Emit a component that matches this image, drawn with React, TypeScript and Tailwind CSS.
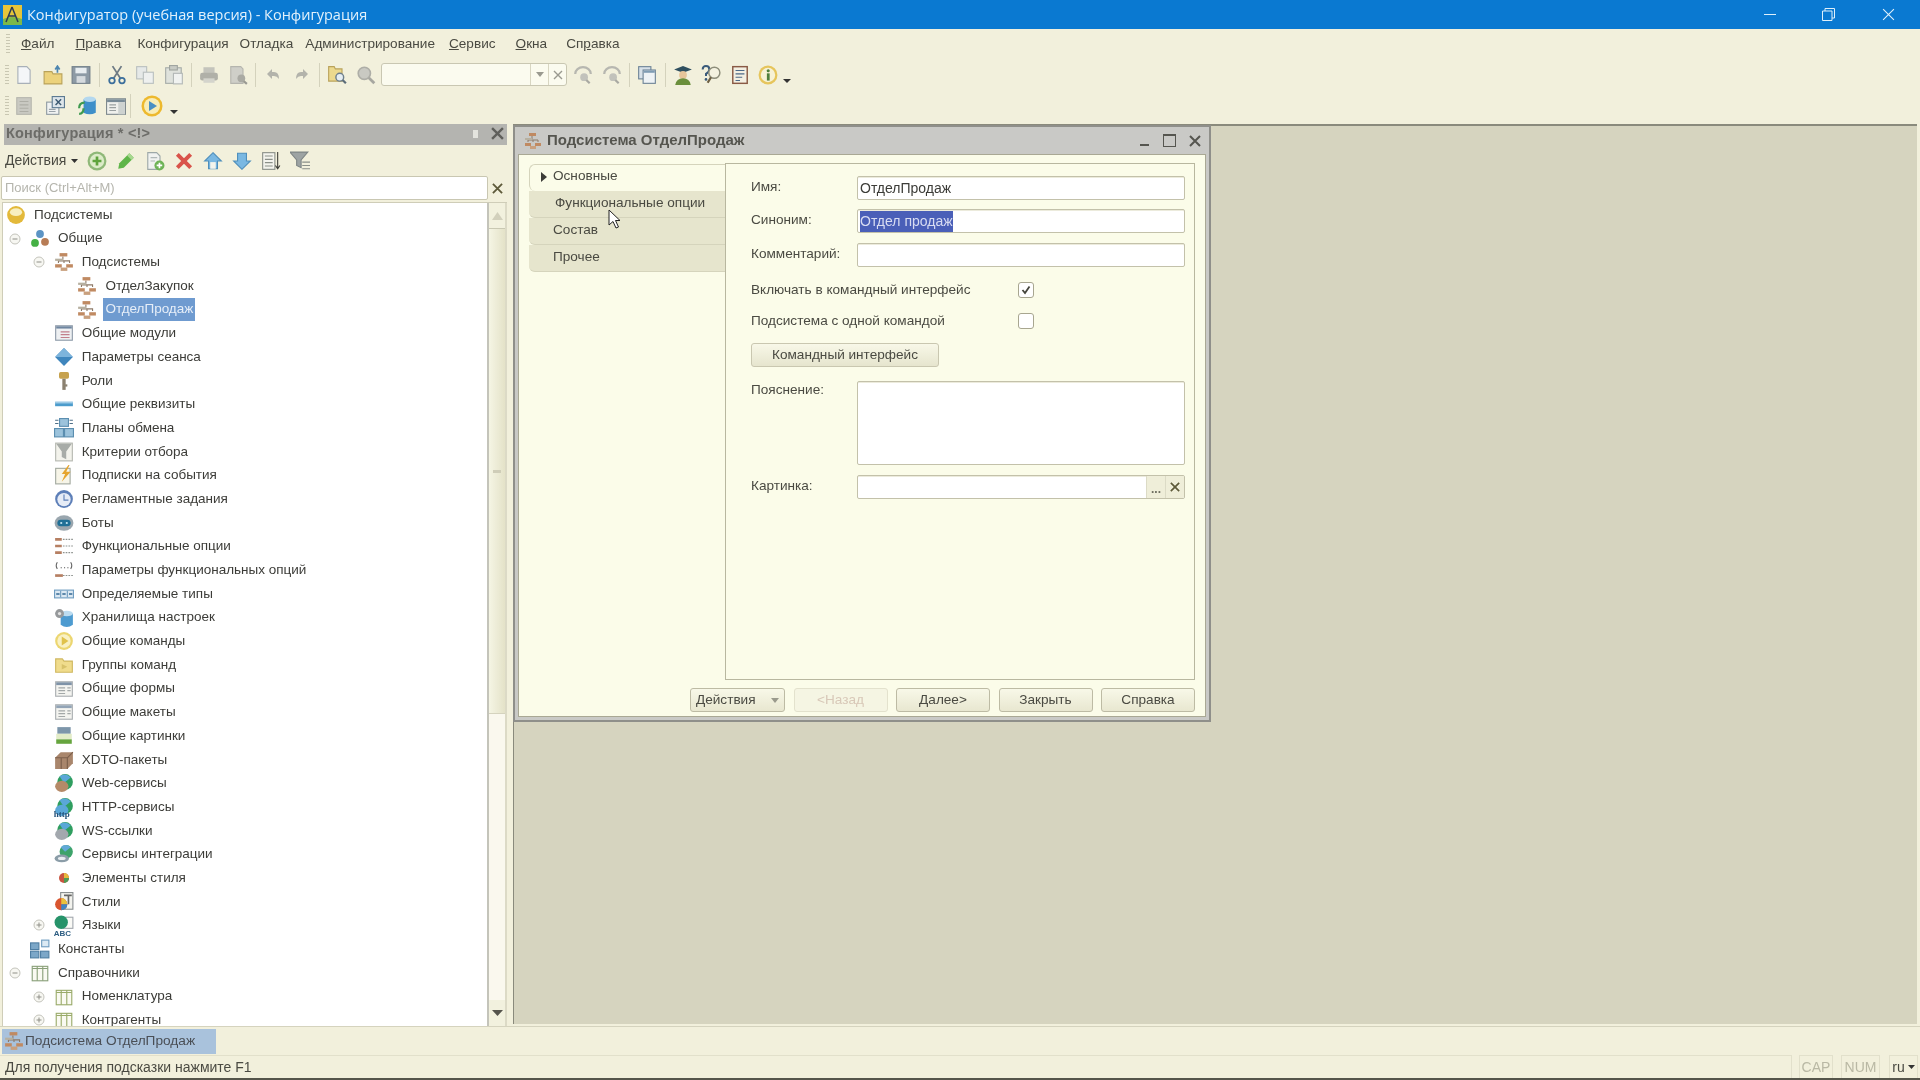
import type { ReactNode } from "react";

const UI = "font-['Liberation_Sans',Arial,sans-serif]";

const Svg = ({ children, s = 20 }: { children: ReactNode; s?: number }) => (
  <svg width={s} height={s} viewBox="0 0 18 18" className="shrink-0">
    {children}
  </svg>
);

const Hierarchy = ({ s = 20 }: { s?: number }) => (
  <Svg s={s}>
    <path d="M8 4v3M4 10V8h10v2M9 8v2" stroke="#8d7a68" fill="none" />
    <rect x="5" y="1" width="7" height="3" fill="#c08a62" />
    <rect x="1" y="6" width="7" height="2" fill="#b7b0a0" />
    <rect x="1" y="11" width="6" height="3" fill="#c08a62" />
    <rect x="11" y="11" width="6" height="3" fill="#c08a62" />
    <rect x="6" y="14" width="6" height="3" fill="#c9a07e" />
  </Svg>
);

const Sheet = ({ head = "#7f93a8" }: { head?: string }) => (
  <Svg>
    <rect x="1.5" y="2.5" width="15" height="13" fill="#f4f4f0" stroke="#a9aeb0" />
    <rect x="2" y="3" width="14" height="2.5" fill={head} />
    <path d="M4 8h6M4 10.5h6M4 13h6M12 8h3M12 10.5h3" stroke="#a3a8a8" />
  </Svg>
);

const Globe = ({ c = "#b58a68" }: { c?: string }) => (
  <Svg>
    <circle cx="10" cy="8" r="7" fill="#2f9e5f" />
    <path d="M5 3a7 7 0 0 1 10 1L9 9Z" fill="#5aa7d8" />
    <ellipse cx="7" cy="12" rx="6" ry="5" fill={c} />
  </Svg>
);

const Table = ({ c = "#8aa07a" }: { c?: string }) => (
  <Svg>
    <rect x="2" y="3" width="14" height="13" fill="#fafaf2" stroke={c} />
    <path d="M2 5h14M6.5 3v13M11.5 3v13" stroke={c} />
  </Svg>
);

const treeIcons: Record<string, ReactNode> = {
  root: (
    <Svg>
      <circle cx="9" cy="9" r="8" fill="#e3b93a" />
      <ellipse cx="9" cy="6.5" rx="5.5" ry="3.5" fill="#f8efc0" />
    </Svg>
  ),
  common: (
    <Svg>
      <circle cx="9" cy="4.5" r="3.5" fill="#5c94c4" />
      <circle cx="4.5" cy="12.5" r="3.5" fill="#45b045" />
      <circle cx="13.5" cy="11.5" r="3.5" fill="#b77c55" />
    </Svg>
  ),
  sub: <Hierarchy />,
  module: (
    <Svg>
      <rect x="1.5" y="2.5" width="15" height="13" fill="#eef0f2" stroke="#8e9aa8" />
      <rect x="2" y="3" width="14" height="2" fill="#6f86a0" />
      <path d="M6 8h8M6 10.5h8M6 13h8" stroke="#c27f8c" />
    </Svg>
  ),
  param: (
    <Svg>
      <path d="M9 1l8 8-8 8-8-8Z" fill="#3f86bd" />
      <path d="M9 1l8 8H1Z" fill="#7db4dc" />
    </Svg>
  ),
  key: (
    <Svg>
      <rect x="4.5" y="1" width="9" height="6" rx="1.5" fill="#c7a24e" />
      <rect x="7.5" y="7" width="3" height="10" fill="#8b8170" />
      <rect x="10" y="12" width="2" height="2" fill="#8b8170" />
    </Svg>
  ),
  bar: (
    <Svg>
      <rect x="1" y="7" width="16" height="4" fill="#4c9ccc" />
      <rect x="1" y="7" width="16" height="1.5" fill="#9fcbe6" />
    </Svg>
  ),
  exchange: (
    <Svg>
      <rect x="5" y="0.5" width="8" height="7" fill="#9cc3dc" stroke="#5b8eb0" />
      <rect x="0.5" y="9.5" width="8" height="7.5" fill="#9cc3dc" stroke="#5b8eb0" />
      <rect x="9.5" y="9.5" width="8" height="7.5" fill="#9cc3dc" stroke="#5b8eb0" />
      <path d="M1 2h3M14 2h3M1 5h3M14 5h3" stroke="#4d6f88" />
    </Svg>
  ),
  filter: (
    <Svg>
      <rect x="1.5" y="1" width="15" height="16" fill="#f3f3ec" stroke="#b5b8b0" />
      <path d="M2 1.5h14l-5 7v7l-4-2v-5Z" fill="#a8aca8" />
    </Svg>
  ),
  event: (
    <Svg>
      <rect x="1.5" y="3" width="13" height="14" fill="#f7f5e8" stroke="#a3a99f" />
      <path d="M13 0l-6 8h3l-3 7 8-9h-4l3-6Z" fill="#e6a52e" />
    </Svg>
  ),
  clock: (
    <Svg>
      <circle cx="9" cy="9" r="8" fill="#5d7fb8" />
      <circle cx="9" cy="9.5" r="6" fill="#e6ecf6" />
      <path d="M9 5v5h4" stroke="#5d7fb8" fill="none" />
    </Svg>
  ),
  bot: (
    <Svg>
      <ellipse cx="9" cy="9" rx="8.5" ry="7" fill="#9aa6ae" />
      <rect x="3" y="6" width="12" height="6" rx="3" fill="#1f6f96" />
      <circle cx="6.5" cy="9" r="1" fill="#c3e4f0" />
      <circle cx="11.5" cy="9" r="1" fill="#c3e4f0" />
    </Svg>
  ),
  option: (
    <Svg>
      <path d="M1 3h6M1 9h6M1 15h6" stroke="#b67f62" strokeWidth="2.4" />
      <path d="M8 3h9M8 9h9M8 15h9" stroke="#8e938f" strokeDasharray="1.5 1" />
    </Svg>
  ),
  optparam: (
    <Svg>
      <path d="M3 2Q1 5 3 8M15 2Q17 5 15 8" stroke="#666" fill="none" />
      <path d="M6 7h1M9 7h1M12 7h1" stroke="#555" />
      <path d="M1 14h7" stroke="#b67f62" strokeWidth="2.4" />
      <path d="M8 14h9" stroke="#8e938f" strokeDasharray="1.5 1" />
    </Svg>
  ),
  types: (
    <Svg>
      <rect x="0.5" y="5.5" width="17" height="7" fill="#dbe8f2" stroke="#6f9cc0" />
      <path d="M6 6v6M12 6v6" stroke="#6f9cc0" />
      <path d="M2 9h3M7.5 9h3M13.5 9h3" stroke="#5d88ab" strokeWidth="2" />
    </Svg>
  ),
  storage: (
    <Svg>
      <path d="M6 5h11v10q-5.5 4-11 0Z" fill="#4d9bd0" />
      <ellipse cx="11.5" cy="5" rx="5.5" ry="2.5" fill="#bcdcf0" />
      <circle cx="5" cy="5" r="4" fill="#96999b" />
      <circle cx="5" cy="5" r="1.5" fill="#e2e2e2" />
    </Svg>
  ),
  play: (
    <Svg>
      <circle cx="9" cy="9" r="8" fill="#ecd670" />
      <circle cx="9" cy="9" r="6" fill="#f9f1c4" />
      <path d="M7 5l6 4-6 4Z" fill="#e0c24c" />
    </Svg>
  ),
  folder: (
    <Svg>
      <path d="M1.5 3.5h6l1.5 2h7.5v10h-15Z" fill="#f0dc8c" stroke="#cfb860" />
      <path d="M7 8l5 2.5-5 2.5Z" fill="#d8c26a" />
    </Svg>
  ),
  form: <Sheet />,
  layout: <Sheet head="#92a4b6" />,
  picture: (
    <Svg>
      <rect x="3" y="1" width="12" height="6" fill="#7d96aa" />
      <rect x="2" y="7" width="14" height="5" fill="#e3ecc8" />
      <rect x="2" y="12" width="14" height="4" fill="#66a53e" />
    </Svg>
  ),
  xdto: (
    <Svg>
      <path d="M1 7l5-5h11v10l-5 5H1Z" fill="#a9866c" />
      <path d="M1 7h11v10M12 7l5-5M6.5 7v10" stroke="#7b5f4b" fill="none" />
    </Svg>
  ),
  web: <Globe />,
  http: (
    <div className="relative h-[20px] w-[20px] shrink-0">
      <Globe c="#5aa7d8" />
      <span className="absolute bottom-[-2px] left-0 font-['Liberation_Serif',serif] text-[9px] leading-[10px] font-bold text-[#24527a]">
        http
      </span>
    </div>
  ),
  ws: <Globe c="#a3a8ae" />,
  integration: (
    <Svg>
      <circle cx="11" cy="7" r="6" fill="#3da36a" />
      <path d="M6 3a6 6 0 0 1 9 0l-5 4Z" fill="#62a9d8" />
      <ellipse cx="7" cy="13" rx="6.5" ry="3.5" fill="#8b9da8" />
      <ellipse cx="7" cy="13" rx="3.5" ry="1.5" fill="#e8edf0" />
    </Svg>
  ),
  styleItem: (
    <Svg>
      <circle cx="9" cy="9" r="4.5" fill="#c9543f" />
      <path d="M9 9V4.5a4.5 4.5 0 0 1 4.5 4.5Z" fill="#e6b93d" />
      <path d="M9 9h4.5A4.5 4.5 0 0 1 9 13.5Z" fill="#4f9a55" />
    </Svg>
  ),
  styles: (
    <Svg>
      <rect x="6" y="0.5" width="11" height="15" fill="#f3f3ee" stroke="#8a8f90" />
      <path d="M9 3h7M13 3v8" stroke="#666" strokeWidth="1.5" />
      <circle cx="6.5" cy="11" r="5.5" fill="#d9552f" />
      <path d="M6.5 11V5.5A5.5 5.5 0 0 1 12 11Z" fill="#e9c13c" />
      <path d="M6.5 11H12A5.5 5.5 0 0 1 6.5 16.5Z" fill="#3f85c4" />
    </Svg>
  ),
  lang: (
    <div className="relative h-[20px] w-[20px] shrink-0">
      <Svg>
        <rect x="8" y="2" width="9" height="10" fill="#fafaf6" stroke="#a3a8ae" />
        <circle cx="6.5" cy="6.5" r="6" fill="#27936a" />
      </Svg>
      <span className="absolute bottom-[-3px] left-0 text-[8px] leading-[9px] font-bold text-[#2d5d82]">ABC</span>
    </div>
  ),
  constant: (
    <Svg>
      <rect x="0.5" y="3.5" width="7.5" height="6" fill="#7ca7c8" stroke="#4f7ea3" />
      <rect x="0.5" y="11" width="7.5" height="6" fill="#7ca7c8" stroke="#4f7ea3" />
      <rect x="9.5" y="11" width="7.5" height="6" fill="#7ca7c8" stroke="#4f7ea3" />
      <rect x="10.5" y="1" width="6.5" height="6" fill="#dceaf4" stroke="#6f9cc0" />
    </Svg>
  ),
  table: <Table />,
  tableGreen: <Table c="#9aab6a" />,
};

type TreeRow = { label: string; level: number; icon: string; toggle?: "-" | "+"; selected?: boolean };

const treeRows: TreeRow[] = [
  { label: "Подсистемы", level: 0, icon: "root" },
  { label: "Общие", level: 1, icon: "common", toggle: "-" },
  { label: "Подсистемы", level: 2, icon: "sub", toggle: "-" },
  { label: "ОтделЗакупок", level: 3, icon: "sub" },
  { label: "ОтделПродаж", level: 3, icon: "sub", selected: true },
  { label: "Общие модули", level: 2, icon: "module" },
  { label: "Параметры сеанса", level: 2, icon: "param" },
  { label: "Роли", level: 2, icon: "key" },
  { label: "Общие реквизиты", level: 2, icon: "bar" },
  { label: "Планы обмена", level: 2, icon: "exchange" },
  { label: "Критерии отбора", level: 2, icon: "filter" },
  { label: "Подписки на события", level: 2, icon: "event" },
  { label: "Регламентные задания", level: 2, icon: "clock" },
  { label: "Боты", level: 2, icon: "bot" },
  { label: "Функциональные опции", level: 2, icon: "option" },
  { label: "Параметры функциональных опций", level: 2, icon: "optparam" },
  { label: "Определяемые типы", level: 2, icon: "types" },
  { label: "Хранилища настроек", level: 2, icon: "storage" },
  { label: "Общие команды", level: 2, icon: "play" },
  { label: "Группы команд", level: 2, icon: "folder" },
  { label: "Общие формы", level: 2, icon: "form" },
  { label: "Общие макеты", level: 2, icon: "layout" },
  { label: "Общие картинки", level: 2, icon: "picture" },
  { label: "XDTO-пакеты", level: 2, icon: "xdto" },
  { label: "Web-сервисы", level: 2, icon: "web" },
  { label: "HTTP-сервисы", level: 2, icon: "http" },
  { label: "WS-ссылки", level: 2, icon: "ws" },
  { label: "Сервисы интеграции", level: 2, icon: "integration" },
  { label: "Элементы стиля", level: 2, icon: "styleItem" },
  { label: "Стили", level: 2, icon: "styles" },
  { label: "Языки", level: 2, icon: "lang", toggle: "+" },
  { label: "Константы", level: 1, icon: "constant" },
  { label: "Справочники", level: 1, icon: "table", toggle: "-" },
  { label: "Номенклатура", level: 2, icon: "tableGreen", toggle: "+" },
  { label: "Контрагенты", level: 2, icon: "tableGreen", toggle: "+" },
];

const Toggle = ({ kind }: { kind: "-" | "+" }) => (
  <svg width="12" height="12" viewBox="0 0 12 12">
    <circle cx="6" cy="6" r="5" fill="#f7f7f2" stroke="#c4c4bc" />
    <path d={kind === "-" ? "M3.5 6h5" : "M3.5 6h5M6 3.5v5"} stroke="#8f8f88" />
  </svg>
);

const Tree = () => (
  <div className="min-w-0 flex-1 overflow-hidden bg-white">
    {treeRows.map((row, i) => (
      <div key={i} className="flex h-[23.7px] items-center">
        {row.level > 0 && <div className="shrink-0" style={{ width: (row.level - 1) * 23.7 + 6 }} />}
        {row.level > 0 && (
          <div className="flex w-[21px] shrink-0 items-center">{row.toggle && <Toggle kind={row.toggle} />}</div>
        )}
        {row.level === 0 && <div className="w-[3px] shrink-0" />}
        <div className="flex w-[26px] shrink-0 items-center">{treeIcons[row.icon]}</div>
        <span
          className={
            row.selected
              ? "flex h-[23px] items-center bg-[#6f9bd0] px-[2px] text-[13.5px] text-[#e6eef8]"
              : "px-[2px] text-[13.5px] text-[#3c3c38]"
          }
        >
          {row.label}
        </span>
      </div>
    ))}
  </div>
);

const ToolIcon = ({ name }: { name: string }) => {
  switch (name) {
    case "new":
      return (
        <Svg>
          <path d="M3.5 1.5h8l3 3v12h-11Z" fill="#f4f6f8" stroke="#a8b0b8" />
        </Svg>
      );
    case "open":
      return (
        <Svg>
          <path d="M1 6h7l1 2h8v9H1Z" fill="#ecd27c" stroke="#b9a25a" />
          <path d="M13 7V2M11 4l2-3 2 3" stroke="#4d86b0" fill="none" strokeWidth="1.5" />
        </Svg>
      );
    case "save":
      return (
        <Svg>
          <rect x="1" y="1.5" width="16" height="15" fill="#8d9aa5" stroke="#727f8a" />
          <rect x="4" y="2.5" width="10" height="5" fill="#e8edf0" />
          <rect x="5" y="10" width="8" height="6" fill="#d5dade" />
        </Svg>
      );
    case "cut":
      return (
        <Svg>
          <path d="M5 1l7 11M13 1L6 12" stroke="#6d7a84" strokeWidth="1.6" />
          <circle cx="4.5" cy="14" r="2.5" fill="none" stroke="#3c6f9c" strokeWidth="1.6" />
          <circle cx="13.5" cy="14" r="2.5" fill="none" stroke="#3c6f9c" strokeWidth="1.6" />
        </Svg>
      );
    case "copy":
      return (
        <Svg>
          <rect x="1.5" y="1.5" width="9" height="11" fill="#e6e9e8" stroke="#b9bfbf" />
          <rect x="7.5" y="6.5" width="9" height="10" fill="#eef0ef" stroke="#b9bfbf" />
        </Svg>
      );
    case "paste":
      return (
        <Svg>
          <rect x="1.5" y="2.5" width="14" height="14" fill="#dfe2dc" stroke="#a6aca8" />
          <rect x="5" y="0.5" width="7" height="4" fill="#c8cbc4" stroke="#a0a5a0" />
          <rect x="8.5" y="7.5" width="8" height="9.5" fill="#f0f2f0" stroke="#b3b8b6" />
        </Svg>
      );
    case "print":
      return (
        <Svg>
          <rect x="4" y="2" width="10" height="6" fill="#c4c4bc" />
          <rect x="1" y="7" width="16" height="7" rx="2" fill="#b0b0a8" />
          <rect x="4" y="12" width="10" height="4" fill="#d4d4cc" />
        </Svg>
      );
    case "preview":
      return (
        <Svg>
          <path d="M2.5 1.5h9l2 2v13h-11Z" fill="#cfcfc8" stroke="#b5b5ae" />
          <circle cx="12" cy="12" r="3.5" fill="#aaaaa3" />
          <path d="M14 14.5l3 2.5" stroke="#9a9a93" strokeWidth="2" />
        </Svg>
      );
    case "undo":
      return (
        <svg width="14" height="14" viewBox="0 0 14 14">
          <path d="M1 6l5-5v3h2q5 0 5 7-2-3-5-3H6v3Z" fill="#b3b3ab" />
        </svg>
      );
    case "redo":
      return (
        <svg width="14" height="14" viewBox="0 0 14 14">
          <path d="M13 6L8 1v3H6q-5 0-5 7 2-3 5-3h2v3Z" fill="#b3b3ab" />
        </svg>
      );
    case "find":
      return (
        <Svg>
          <path d="M1.5 1.5h5l1 2h6v11h-12Z" fill="#ecd98e" stroke="#b9a25a" />
          <circle cx="11.5" cy="11" r="3.5" fill="#e6eef3" stroke="#6e7f8c" strokeWidth="1.3" />
          <path d="M14 13.5l3 3" stroke="#5c6d7a" strokeWidth="2" />
        </Svg>
      );
    case "zoom":
      return (
        <Svg>
          <circle cx="7.5" cy="7.5" r="5.5" fill="#c9c9c2" stroke="#aeaea7" strokeWidth="1.5" />
          <path d="M11.5 11.5l5 5" stroke="#a7a7a0" strokeWidth="2.5" />
        </Svg>
      );
    case "prevRes":
    case "nextRes":
      return (
        <Svg>
          <path d="M2 8a7 6 0 0 1 14 0" stroke="#b7b7b0" strokeWidth="2" fill="none" />
          <circle cx="10" cy="11" r="3.5" fill="#c2c2bb" />
          <path d="M12 13.5l3 3" stroke="#a9a9a2" strokeWidth="2" />
        </Svg>
      );
    case "windows":
      return (
        <Svg>
          <rect x="1.5" y="1.5" width="11" height="11" fill="#d8e1e8" stroke="#6d8396" />
          <rect x="5.5" y="4.5" width="11" height="12" fill="#eef2f5" stroke="#6d8396" />
          <rect x="6" y="5" width="10" height="2" fill="#7f9cb3" />
        </Svg>
      );
    case "teacher":
      return (
        <Svg>
          <path d="M1 4l8-3 8 3-8 3Z" fill="#2f4f5f" />
          <circle cx="9" cy="9" r="3.5" fill="#e7c59a" />
          <path d="M2 18q1-6 7-6t7 6Z" fill="#6b8f3c" />
        </Svg>
      );
    case "helpFind":
      return (
        <Svg>
          <path d="M1.5 4q0-3 3-3t3 3q0 2-3 4v2" stroke="#3a5a7a" strokeWidth="1.8" fill="none" />
          <circle cx="4.5" cy="13" r="1.2" fill="#3a5a7a" />
          <circle cx="12" cy="7" r="5" fill="#f4f2e0" stroke="#8d8d7a" strokeWidth="1.3" />
          <path d="M9 11l-3 5" stroke="#6d5f42" strokeWidth="2" />
        </Svg>
      );
    case "book":
      return (
        <Svg>
          <rect x="2.5" y="1.5" width="13" height="15" fill="#f3efe2" stroke="#8a5a45" strokeWidth="1.3" />
          <path d="M5 5h8M5 8h8M5 11h6M5 14h4" stroke="#4d6a88" />
        </Svg>
      );
    case "info":
      return (
        <Svg>
          <circle cx="9" cy="9" r="8.5" fill="#e6c55c" />
          <circle cx="9" cy="9" r="6.5" fill="#f7f2d6" />
          <rect x="8" y="7.5" width="2.5" height="6.5" fill="#4f7f3c" />
          <circle cx="9.2" cy="5.2" r="1.4" fill="#4f7f3c" />
        </Svg>
      );
    case "doc":
      return (
        <Svg>
          <rect x="2.5" y="1.5" width="13" height="15" fill="#c9c9c2" stroke="#b6b6ae" />
          <path d="M5 5h8M5 8h8M5 11h8M5 14h8" stroke="#aeaea6" />
        </Svg>
      );
    case "xdoc":
      return (
        <Svg>
          <rect x="1.5" y="5.5" width="11" height="11" fill="#f0f2f2" stroke="#8f9aa2" />
          <rect x="6.5" y="0.5" width="11" height="10" fill="#dde5ea" stroke="#5c7a92" />
          <path d="M9.5 3l5 5M14.5 3l-5 5" stroke="#3c5a72" strokeWidth="1.3" />
          <path d="M3.5 12h6M3.5 14h6" stroke="#9aa3aa" />
        </Svg>
      );
    case "db":
      return (
        <Svg>
          <path d="M5 3v12q5.5 3 11 0V3Z" fill="#3e8fc9" />
          <ellipse cx="10.5" cy="3" rx="5.5" ry="2.5" fill="#b4d8ef" />
          <path d="M1 11q0-5 5-5M1 16q4 0 4-5" stroke="#3f9a4f" strokeWidth="2" fill="none" />
        </Svg>
      );
    case "tableWin":
      return (
        <Svg>
          <rect x="0.5" y="2.5" width="17" height="14" fill="#eff0ec" stroke="#7f8a8e" />
          <rect x="1" y="3" width="16" height="2.5" fill="#778a96" />
          <rect x="11" y="5.5" width="6" height="11" fill="#cdd2d0" />
          <path d="M3 8h6M3 10.5h6M3 13h6" stroke="#9aa0a0" />
        </Svg>
      );
    case "run":
      return (
        <svg width="22" height="22" viewBox="0 0 22 22">
          <circle cx="11" cy="11" r="10.5" fill="#edb92e" />
          <circle cx="11" cy="11" r="8" fill="#f9edb6" />
          <path d="M8 6l8 5-8 5Z" fill="#4a8fc4" />
        </svg>
      );
    default:
      return null;
  }
};

const Sep = () => <div className="mx-[3px] h-[24px] w-px shrink-0 bg-[#d4d2bc]" />;
const Tool = ({ name, w = 28.5 }: { name: string; w?: number }) => (
  <div className="flex h-[26px] shrink-0 items-center justify-center" style={{ width: w }}>
    <ToolIcon name={name} />
  </div>
);
const Grip = () => (
  <div className="h-[20px] w-[4px] shrink-0 bg-[repeating-linear-gradient(180deg,#c9c7b2_0,#c9c7b2_1px,transparent_1px,transparent_3px)]" />
);
const Caret = () => (
  <svg width="8" height="4" viewBox="0 0 8 4" className="mt-[12px] shrink-0">
    <path d="M0 0h8L4 4Z" fill="#333" />
  </svg>
);

const menuItems = [
  { label: "Файл", u: 0, mr: 21 },
  { label: "Правка", u: 0, mr: 16 },
  { label: "Конфигурация", u: -1, mr: 11 },
  { label: "Отладка", u: -1, mr: 12 },
  { label: "Администрирование", u: -1, mr: 14 },
  { label: "Сервис", u: 0, mr: 20 },
  { label: "Окна", u: 0, mr: 19 },
  { label: "Справка", u: 2, mr: 0 },
];

const MenuBar = () => (
  <div className="flex h-[30px] shrink-0 items-center pl-[6px] text-[13.6px] text-[#4a4a42]">
    <Grip />
    <div className="ml-[11px] flex">
      {menuItems.map((m) => (
        <span key={m.label} style={{ marginRight: m.mr }}>
          {m.u >= 0 ? (
            <>
              {m.label.slice(0, m.u)}
              <span className="underline">{m.label[m.u]}</span>
              {m.label.slice(m.u + 1)}
            </>
          ) : (
            m.label
          )}
        </span>
      ))}
    </div>
  </div>
);

const ToolbarOne = () => (
  <div className="flex h-[31px] shrink-0 items-center pl-[5px]">
    <Grip />
    <div className="ml-[1px] flex items-center">
      <Tool name="new" />
      <Tool name="open" />
      <Tool name="save" />
      <Sep />
      <Tool name="cut" />
      <Tool name="copy" />
      <Tool name="paste" />
      <Sep />
      <Tool name="print" />
      <Tool name="preview" />
      <Sep />
      <Tool name="undo" />
      <Tool name="redo" />
      <Sep />
      <Tool name="find" />
      <Tool name="zoom" />
      <div className="ml-[1px] flex h-[23px] w-[186px] shrink-0 items-center rounded-[3px] border border-[#c9c7b2] bg-[#fbfbef]">
        <div className="h-full flex-1" />
        <div className="flex h-full w-[18px] items-center justify-center border-l border-[#d8d6c2]">
          <svg width="8" height="5" viewBox="0 0 8 5">
            <path d="M0 0h8L4 5Z" fill="#9a9a90" />
          </svg>
        </div>
        <div className="flex h-full w-[18px] items-center justify-center border-l border-[#d8d6c2] text-[#9a9a90]">
          <svg width="10" height="10" viewBox="0 0 10 10">
            <path d="M1 1l8 8M9 1l-8 8" stroke="currentColor" strokeWidth="1.4" />
          </svg>
        </div>
      </div>
      <div className="w-[2px]" />
      <Tool name="prevRes" />
      <Tool name="nextRes" />
      <Sep />
      <Tool name="windows" />
      <Sep />
      <Tool name="teacher" />
      <Tool name="helpFind" />
      <Tool name="book" />
      <Tool name="info" />
      <Caret />
    </div>
  </div>
);

const ToolbarTwo = () => (
  <div className="flex h-[34px] shrink-0 items-center pb-[2px] pl-[5px]">
    <Grip />
    <div className="ml-[1px] flex items-center">
      <Tool name="doc" w={28} />
      <Tool name="xdoc" w={33} />
      <Tool name="db" w={33} />
      <Tool name="tableWin" w={23} />
      <Sep />
      <Tool name="run" w={36} />
      <Caret />
    </div>
  </div>
);

const XMark = ({ c = "#5e5a3a", s = 12, w = 2 }: { c?: string; s?: number; w?: number }) => (
  <svg width={s} height={s} viewBox="0 0 12 12" className="shrink-0">
    <path d="M1 1l10 10M11 1L1 11" stroke={c} strokeWidth={w} />
  </svg>
);

const ActionIcon = ({ name }: { name: string }) => {
  switch (name) {
    case "add":
      return (
        <Svg>
          <circle cx="9" cy="9" r="8.5" fill="#8fb878" />
          <circle cx="9" cy="9" r="6.5" fill="#dcebc8" />
          <path d="M9 5v8M5 9h8" stroke="#5ea33c" strokeWidth="2.4" />
        </Svg>
      );
    case "edit":
      return (
        <Svg>
          <path d="M12 2l4 4-9 9-5 1 1-5Z" fill="#5fb548" />
          <path d="M12 2l4 4-2 2-4-4Z" fill="#a8d890" />
        </Svg>
      );
    case "copyAdd":
      return (
        <Svg>
          <path d="M2.5 1.5h8l3 3v12h-11Z" fill="#f0f2f0" stroke="#9da8a8" />
          <path d="M5 6h6M5 9h4" stroke="#b0b8b8" />
          <circle cx="13" cy="13" r="4.5" fill="#6eb356" />
          <path d="M13 10.5v5M10.5 13h5" stroke="#fff" strokeWidth="1.5" />
        </Svg>
      );
    case "del":
      return (
        <Svg>
          <path d="M3 3l12 12M15 3L3 15" stroke="#d9534a" strokeWidth="3.6" />
        </Svg>
      );
    case "up":
      return (
        <Svg>
          <path d="M9 1.5l7.5 7.5H13v7H5V9H1.5Z" fill="#7ab8e2" stroke="#4f8fbc" />
          <rect x="6.5" y="10" width="5" height="6" fill="#f4f4ec" />
        </Svg>
      );
    case "down":
      return (
        <Svg>
          <path d="M9 16.5L1.5 9H5V2h8v7h3.5Z" fill="#7ab8e2" stroke="#4f8fbc" />
        </Svg>
      );
    case "sort":
      return (
        <Svg>
          <rect x="1.5" y="1.5" width="11" height="15" fill="#f4f4ee" stroke="#8a8f88" />
          <path d="M3.5 4.5h7M3.5 7.5h7M3.5 10.5h7M3.5 13.5h7" stroke="#8a8f88" />
          <path d="M15 1v14M13 13l2 3 2-3" stroke="#3f3f3a" fill="none" />
        </Svg>
      );
    case "filter":
      return (
        <Svg>
          <path d="M0 1h16l-6 7v7l-4-2V8Z" fill="#9da3a3" stroke="#7f8686" />
          <path d="M11 10h7M11 13h7M11 16h7" stroke="#8a8f88" />
        </Svg>
      );
    default:
      return null;
  }
};

const ConfigPanel = () => (
  <div className="flex w-[507px] shrink-0 flex-col">
    <div className="ml-[4px] flex h-[21px] shrink-0 items-center justify-between bg-[#b4b4b0] pr-[3px] pb-[2px] pl-[2px]">
      <span className="text-[14.5px] font-bold tracking-[0.2px] text-[#6c6c68]">Конфигурация * &lt;!&gt;</span>
      <div className="flex items-center gap-[13px]">
        <div className="h-[8px] w-[5px] bg-[#e4e4de]" />
        <XMark c="#5f5f5b" s={13} w={2.2} />
      </div>
    </div>
    <div className="flex h-[31px] shrink-0 items-center pl-[5px] text-[14px] text-[#4a4a42]">
      <span>Действия</span>
      <svg width="7" height="4" viewBox="0 0 7 4" className="ml-[5px]">
        <path d="M0 0h7L3.5 4Z" fill="#333" />
      </svg>
      <div className="ml-[4px] flex items-center">
        {["add", "edit", "copyAdd", "del", "up", "down", "sort", "filter"].map((n) => (
          <div key={n} className="flex h-[24px] w-[29px] items-center justify-center">
            <ActionIcon name={n} />
          </div>
        ))}
      </div>
    </div>
    <div className="flex h-[24px] shrink-0 items-center pl-[1px]">
      <div className="flex h-full w-[487px] items-center rounded-[2px] border border-[#c9c7b2] bg-white pl-[3px] text-[13px] text-[#b5b5ad]">
        Поиск (Ctrl+Alt+M)
      </div>
      <div className="flex flex-1 items-center justify-center">
        <XMark c="#5e5a3a" s={11} />
      </div>
    </div>
    <div className="mt-[2px] ml-[2px] flex min-h-0 flex-1 border-t border-l border-[#cfcdb8]">
      <Tree />
      <div className="flex w-[20px] shrink-0 flex-col border-x-[2px] border-x-[#c4c4ba] border-r-[#dcdac6] bg-[#faf8ee]">
        <div className="flex h-[26px] shrink-0 items-center justify-center border-b border-[#c9c8b2] bg-[#f2f1de]">
          <svg width="11" height="8" viewBox="0 0 11 8">
            <path d="M5.5 0L11 8H0Z" fill="#d2d0bc" />
          </svg>
        </div>
        <div className="flex h-[485px] shrink-0 items-center justify-center border-b border-[#d5d3be] bg-gradient-to-r from-[#f5f5e4] to-[#e4e2c8]">
          <div className="h-[3px] w-[8px] bg-[#cfcdb8]" />
        </div>
        <div className="flex-1" />
        <div className="flex h-[26px] shrink-0 items-center justify-center bg-[#f2f1de]">
          <svg width="11" height="6" viewBox="0 0 11 6">
            <path d="M5.5 6L11 0H0Z" fill="#55544c" />
          </svg>
        </div>
      </div>
    </div>
  </div>
);

const Field = ({ children, className = "" }: { children?: ReactNode; className?: string }) => (
  <div
    className={`flex h-[24px] w-[328px] items-center overflow-hidden rounded-[2px] border border-[#c3c1aa] bg-white pl-[2px] text-[14px] text-[#3c3c38] shadow-[inset_0_1px_0_#ecebdc] ${className}`}
  >
    {children}
  </div>
);

const Label = ({ children }: { children: ReactNode }) => (
  <span className="-mt-[2px] w-[106px] shrink-0 text-[#4a4a42]">{children}</span>
);

const Check = ({ checked }: { checked?: boolean }) => (
  <div className="flex h-[16px] w-[16px] items-center justify-center rounded-[3px] border border-[#a8a690] bg-white">
    {checked && (
      <svg width="10" height="10" viewBox="0 0 10 10">
        <path d="M1.5 5l2.5 3 4.5-6.5" stroke="#45453c" strokeWidth="1.8" fill="none" />
      </svg>
    )}
  </div>
);

const FootButton = ({ children, disabled }: { children: ReactNode; disabled?: boolean }) => (
  <div
    className={`flex h-[24px] w-[94px] items-center justify-center rounded-[3px] border text-[13.6px] ${
      disabled
        ? "border-[#e3e2cd] bg-[#f5f5e3] text-[#d8c8b8]"
        : "border-[#bdbba4] bg-gradient-to-b from-[#f8f8e8] to-[#e8e7d0] text-[#4a4a42]"
    }`}
  >
    {children}
  </div>
);

const tabs = ["Функциональные опции", "Состав", "Прочее"];

const SubsystemDialog = () => (
  <div className="relative ml-[-1px] flex h-[597px] w-[698px] flex-col border-[2px] border-[#8f8f8a] bg-[#c9c9c6]">
    <div className="flex h-[27px] shrink-0 items-center pr-[8px] pl-[9px]">
      <Hierarchy s={18} />
      <span className="ml-[5px] flex-1 text-[15px] font-bold text-[#55554f]">Подсистема ОтделПродаж</span>
      <div className="flex items-center gap-[13px]">
        <div className="mt-[9px] mr-[1px] h-[2px] w-[9px] bg-[#55554f]" />
        <div className="h-[13px] w-[13px] border border-t-[2px] border-[#55554f]" />
        <XMark c="#55554f" s={12} />
      </div>
    </div>
    <div className="mx-[3px] mb-[3px] flex min-h-0 flex-1 flex-col border border-[#a9a894] bg-[#fbfce9] pr-[10px] pl-[10px]">
      <div className="mt-[8px] flex min-h-0 flex-1">
        <div className="mt-[1px] w-[196px] shrink-0 text-[13.6px] text-[#4a4a42]">
          <div className="-mr-px flex h-[27px] items-center rounded-tl-[6px] rounded-bl-[6px] border-t border-l border-[#d5d4bc] bg-[#fbfce9] pb-[3px] pl-[11px]">
            <svg width="6" height="10" viewBox="0 0 6 10" className="mr-[6px]">
              <path d="M0 0l6 5-6 5Z" fill="#3c3c38" />
            </svg>
            Основные
          </div>
          {tabs.map((t, i) => (
            <div
              key={t}
              className={`flex h-[27px] items-center rounded-bl-[6px] border-b border-[#d5d4bc] bg-[#e6e5cd] pb-[2px] ${
                i === 0 ? "pl-[26px]" : "pl-[24px]"
              }`}
            >
              {t}
            </div>
          ))}
        </div>
        <div className="min-w-0 flex-1 border border-[#b8b79f] pt-[12px] pl-[25px] text-[13.6px] text-[#4a4a42]">
          <div className="flex h-[24px] items-center">
            <Label>Имя:</Label>
            <Field>ОтделПродаж</Field>
          </div>
          <div className="mt-[9px] flex h-[24px] items-center">
            <Label>Синоним:</Label>
            <Field>
              <span className="bg-[#4a5fb8] text-[#d8dcf2]">Отдел продаж</span>
            </Field>
          </div>
          <div className="mt-[10px] flex h-[24px] items-center">
            <Label>Комментарий:</Label>
            <Field />
          </div>
          <div className="mt-[15px] flex h-[16px] items-center">
            <span className="w-[267px] shrink-0">Включать в командный интерфейс</span>
            <Check checked />
          </div>
          <div className="mt-[15px] flex h-[16px] items-center">
            <span className="w-[267px] shrink-0">Подсистема с одной командой</span>
            <Check />
          </div>
          <div className="mt-[14px] flex h-[24px] w-[188px] items-center justify-center rounded-[3px] border border-[#c9c7b0] bg-gradient-to-b from-[#f8f8e8] to-[#e6e5ce]">
            Командный интерфейс
          </div>
          <div className="mt-[14px] flex h-[84px] items-start">
            <span className="-mt-[1px] w-[106px] shrink-0">Пояснение:</span>
            <Field className="!h-[84px]" />
          </div>
          <div className="mt-[10px] flex h-[24px] items-center">
            <Label>Картинка:</Label>
            <Field className="!pr-0">
              <div className="flex-1" />
              <div className="flex h-full w-[19px] items-end justify-center border-l border-[#dcdbc6] bg-[#efeed9] pb-[3px] text-[12px] leading-[12px] font-bold text-[#6e6e60]">
                ...
              </div>
              <div className="flex h-full w-[19px] items-center justify-center border-l border-[#dcdbc6] bg-[#efeed9]">
                <XMark c="#5e5a3a" s={10} />
              </div>
            </Field>
          </div>
        </div>
      </div>
      <div className="flex h-[36px] shrink-0 items-start justify-end gap-[8.5px] pt-[8px]">
        <div className="flex h-[24px] w-[95px] items-center justify-between rounded-[3px] border border-[#bdbba4] bg-gradient-to-b from-[#f8f8e8] to-[#e8e7d0] pr-[5px] pl-[5px] text-[13.6px] text-[#4a4a42]">
          Действия
          <svg width="8" height="5" viewBox="0 0 8 5">
            <path d="M0 0h8L4 5Z" fill="#9a9a8c" />
          </svg>
        </div>
        <FootButton disabled>&lt;Назад</FootButton>
        <FootButton>Далее&gt;</FootButton>
        <FootButton>Закрыть</FootButton>
        <FootButton>Справка</FootButton>
      </div>
    </div>
    <svg width="14" height="20" viewBox="0 0 14 20" className="absolute top-[82px] left-[93px]">
      <path d="M1 1v15l4-3.5 3 6.5 2.5-1-3-6.5H12Z" fill="#fff" stroke="#222" />
    </svg>
  </div>
);

export default function App() {
  return (
    <div className={`flex h-screen w-screen flex-col overflow-hidden bg-[#f2f0dc] blur-[0.35px] ${UI}`}>
      <div className="flex h-[29px] shrink-0 items-center bg-[#0a79d1] pl-[3px] text-[#e2f1fb]">
        <svg width="19" height="20" viewBox="0 0 19 20" className="shrink-0">
          <rect width="19" height="20" fill="#e6c53a" />
          <path d="M0 14q9-4 19 0v6H0Z" fill="#7cb84a" />
          <path d="M9 2L3 17M9 2l6 15M5 11h8" stroke="#2b3a55" strokeWidth="1.5" fill="none" />
        </svg>
        <span className="ml-[5px] flex-1 font-['Open_Sans',sans-serif] text-[14.5px]">
          Конфигуратор (учебная версия) - Конфигурация
        </span>
        <div className="flex items-center text-[#dff0fb]">
          <div className="flex w-[58px] justify-center">
            <div className="h-px w-[12px] bg-current" />
          </div>
          <div className="flex w-[58px] justify-center">
            <svg width="13" height="13" viewBox="0 0 13 13">
              <path d="M.5 3h9.5v9.5H.5ZM3 3V.5h9.5V10H10" stroke="currentColor" fill="none" />
            </svg>
          </div>
          <div className="flex w-[63px] justify-center">
            <XMark c="#dff0fb" s={13} w={1} />
          </div>
        </div>
      </div>

      <MenuBar />
      <ToolbarOne />
      <ToolbarTwo />

      <div className="flex min-h-0 flex-1">
        <ConfigPanel />
        <div className="mr-[3px] mb-[2px] ml-[6px] min-w-0 flex-1 border-t-[2px] border-l border-[#8a8a7c] bg-[#d6d4bf]">
          <div className="-mt-[1px]">
            <SubsystemDialog />
          </div>
        </div>
      </div>

      <div className="flex h-[28px] shrink-0 items-center border-t border-[#d5d3be] pt-[1px] pl-[2px]">
        <div className="flex h-[25px] w-[214px] items-center gap-[1px] bg-[#a9c2dc] pl-[2px] text-[13.7px] text-[#4a4f56]">
          <Hierarchy s={20} />
          <span>Подсистема ОтделПродаж</span>
        </div>
      </div>
      <div className="flex h-[26px] shrink-0 items-stretch border-b-[2px] border-[#55554a] pt-[1px] text-[14px]">
        <div className="flex w-[1792px] items-center border-t border-r border-[#e2e0cb] pl-[5px] text-[#4a4a42]">
          Для получения подсказки нажмите F1
        </div>
        <div className="ml-[7px] flex w-[34px] items-center justify-center border-x border-t border-[#e2e0cb] text-[#b9b8a4]">
          CAP
        </div>
        <div className="ml-[8px] flex w-[39px] items-center justify-center border-x border-t border-[#e2e0cb] text-[#b9b8a4]">
          NUM
        </div>
        <div className="ml-[9px] flex w-[29px] items-center justify-center gap-[3px] border-x border-t border-[#e2e0cb] text-[#4a4a42]">
          ru
          <svg width="7" height="4" viewBox="0 0 7 4">
            <path d="M0 0h7L3.5 4Z" fill="#333" />
          </svg>
        </div>
      </div>
    </div>
  );
}
